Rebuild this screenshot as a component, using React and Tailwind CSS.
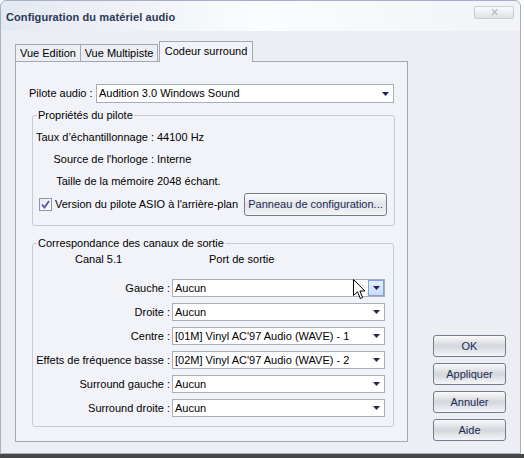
import React from "react";

const font = "font-['Liberation_Sans',Arial,sans-serif]";

function Arrow() {
  return (
    <svg width="7" height="4" viewBox="0 0 7 4">
      <polygon points="0,0 7,0 3.5,4" fill="#1d2657" />
    </svg>
  );
}

function Select({ value, hot, cursor, className = "" }) {
  return (
    <div
      className={`relative h-[18px] border border-[#a7aeb9] bg-white flex items-center ${className}`}
    >
      <span className="pl-[2px] text-black truncate">{value}</span>
      <div
        className={`ml-auto h-full w-[16px] flex items-center justify-center ${
          hot
            ? "border border-[#7fa4d6] bg-gradient-to-b from-[#e6f0fd] to-[#c7dbf8]"
            : ""
        }`}
      >
        <Arrow />
      </div>
      {cursor && (
        <svg
          className="absolute right-[18px] top-[-1px]"
          width="13"
          height="21"
          viewBox="0 0 13 21"
        >
          <path
            d="M0.5 0.5 L0.5 16.5 L4.5 12.8 L7.3 19.5 L9.6 18.5 L6.9 12 L11.8 12 Z"
            fill="white"
            stroke="black"
            strokeWidth="1"
          />
        </svg>
      )}
    </div>
  );
}

function Button({ children, className = "" }) {
  return (
    <button
      className={`h-[22px] rounded-[3px] border border-[#737c8d] bg-gradient-to-b from-[#fbfbfc] via-[#d3d6dc] to-[#f4f5f7] text-[#1b2a52] text-[11px] leading-none whitespace-nowrap ${className}`}
    >
      {children}
    </button>
  );
}

function Tab({ label, active, className = "" }) {
  return (
    <div
      className={`flex items-center justify-center border-t border-l border-r border-[#a3a9b4] whitespace-nowrap ${
        active
          ? "h-[21px] -mb-px bg-[#f2f3f8] z-10 relative pb-[2px]"
          : "h-[17px] bg-[#edeef3]"
      } ${className}`}
    >
      {label}
    </div>
  );
}

const channels = [
  ["Gauche :", "Aucun", true],
  ["Droite :", "Aucun"],
  ["Centre :", "[01M] Vinyl AC'97 Audio (WAVE) - 1"],
  ["Effets de fréquence basse :", "[02M] Vinyl AC'97 Audio (WAVE) - 2"],
  ["Surround gauche :", "Aucun"],
  ["Surround droite :", "Aucun"],
];

export default function App() {
  return (
    <div className={`w-[524px] h-[458px] bg-white overflow-hidden flex flex-col text-[11px] text-black ${font}`}>
      <div className="w-[521px] flex flex-col border border-[#a6b0c0] rounded-t-[6px] bg-[#eceef4]">
        {/* title bar */}
        <div className="h-[30px] flex items-start justify-between pl-[5px] pr-[6px] rounded-t-[6px] bg-gradient-to-r from-[#e4e8f0] via-[#fbfcfd] to-[#f1f3f7]">
          <div className="mt-[8px] text-[11px] font-bold text-[#2a3856] tracking-[0.1px]">
            Configuration du matériel audio
          </div>
          <div className="mt-[5px] w-[40px] h-[13px] rounded-[2px] border border-[#c8cdd6] bg-gradient-to-b from-[#fafbfc] to-[#dfe2e8] flex items-center justify-center text-[#b3b8c2] text-[11px] leading-none">
            ✕
          </div>
        </div>

        {/* body */}
        <div className="flex pl-[14px] pb-[11px] pt-[10px]">
          <div className="w-[393px] flex flex-col">
            <div className="flex items-end">
              <Tab label="Vue Edition" className="w-[66px]" />
              <Tab label="Vue Multipiste" className="w-[77px] border-l-0" />
              <Tab label="Codeur surround" active className="w-[94px] ml-[1px]" />
            </div>
            <div className="border border-[#a3a9b4] bg-[#f2f3f8] pl-[12px] pr-[12px] pt-[22px] pb-[14px]">
              <div className="flex items-center h-[19px]">
                <span className="w-[68px] pl-[1px] whitespace-nowrap">Pilote audio :</span>
                <Select value="Audition 3.0 Windows Sound" className="flex-1 h-[19px] mr-[1px]" />
              </div>

              <fieldset className="mt-[5px] ml-[4px] border border-[#c8cbd4] rounded-[3px]">
                <legend className="ml-[4px] px-[1px] leading-[14px]">Propriétés du pilote</legend>
                <div className="pt-[4px] pb-[9px]">
                  <div className="grid grid-cols-[121px_1fr] gap-x-[3px] whitespace-nowrap">
                    <div className="h-[22px] flex items-center justify-end">Taux d’échantillonnage :</div>
                    <div className="h-[22px] flex items-center">44100 Hz</div>
                    <div className="h-[22px] flex items-center justify-end">Source de l'horloge :</div>
                    <div className="h-[22px] flex items-center">Interne</div>
                    <div className="h-[22px] flex items-center justify-end">Taille de la mémoire</div>
                    <div className="h-[22px] flex items-center">2048 échant.</div>
                  </div>
                  <div className="h-[24px] flex items-center whitespace-nowrap">
                    <div className="ml-[6px] w-[13px] h-[13px] border border-[#8796b8] bg-gradient-to-br from-[#e6e9f0] to-white flex items-center justify-center">
                      <svg width="9" height="9" viewBox="0 0 9 9">
                        <polyline points="1,4.5 3.5,7.5 8,1" fill="none" stroke="#5456a6" strokeWidth="1.8" />
                      </svg>
                    </div>
                    <span className="ml-[3px]">Version du pilote ASIO à l'arrière-plan</span>
                    <Button className="ml-auto mr-[7px] w-[143px] h-[23px] border-[#8a93a5] from-[#fdfdfe] via-[#e2e4e9] to-[#d9dce2]">
                      Panneau de configuration...
                    </Button>
                  </div>
                </div>
              </fieldset>

              <fieldset className="mt-[10px] ml-[4px] mr-[1px] border border-[#c8cbd4] rounded-[3px]">
                <legend className="ml-[4px] px-[1px] leading-[14px]">Correspondance des canaux de sortie</legend>
                <div className="pb-[9px]">
                  <div className="h-[18px] flex items-center pl-[42px] whitespace-nowrap">
                    <span className="w-[134px]">Canal 5.1</span>
                    <span>Port de sortie</span>
                  </div>
                  <div className="mt-[11px] grid grid-cols-[139px_213px] gap-y-[6px] whitespace-nowrap">
                    {channels.map(([label, value, hot]) => (
                      <React.Fragment key={label}>
                        <div className="h-[18px] flex items-center justify-end pr-[2px]">{label}</div>
                        <Select value={value} hot={hot} cursor={hot} />
                      </React.Fragment>
                    ))}
                  </div>
                </div>
              </fieldset>
            </div>
          </div>

          <div className="flex-1 flex flex-col items-end justify-end gap-[6px] pr-[14px] pb-[1px]">
            <Button className="w-[73px]">OK</Button>
            <Button className="w-[73px]">Appliquer</Button>
            <Button className="w-[73px]">Annuler</Button>
            <Button className="w-[73px]">Aide</Button>
          </div>
        </div>
      </div>
      <div className="flex-1 bg-[#474747]" />
    </div>
  );
}
